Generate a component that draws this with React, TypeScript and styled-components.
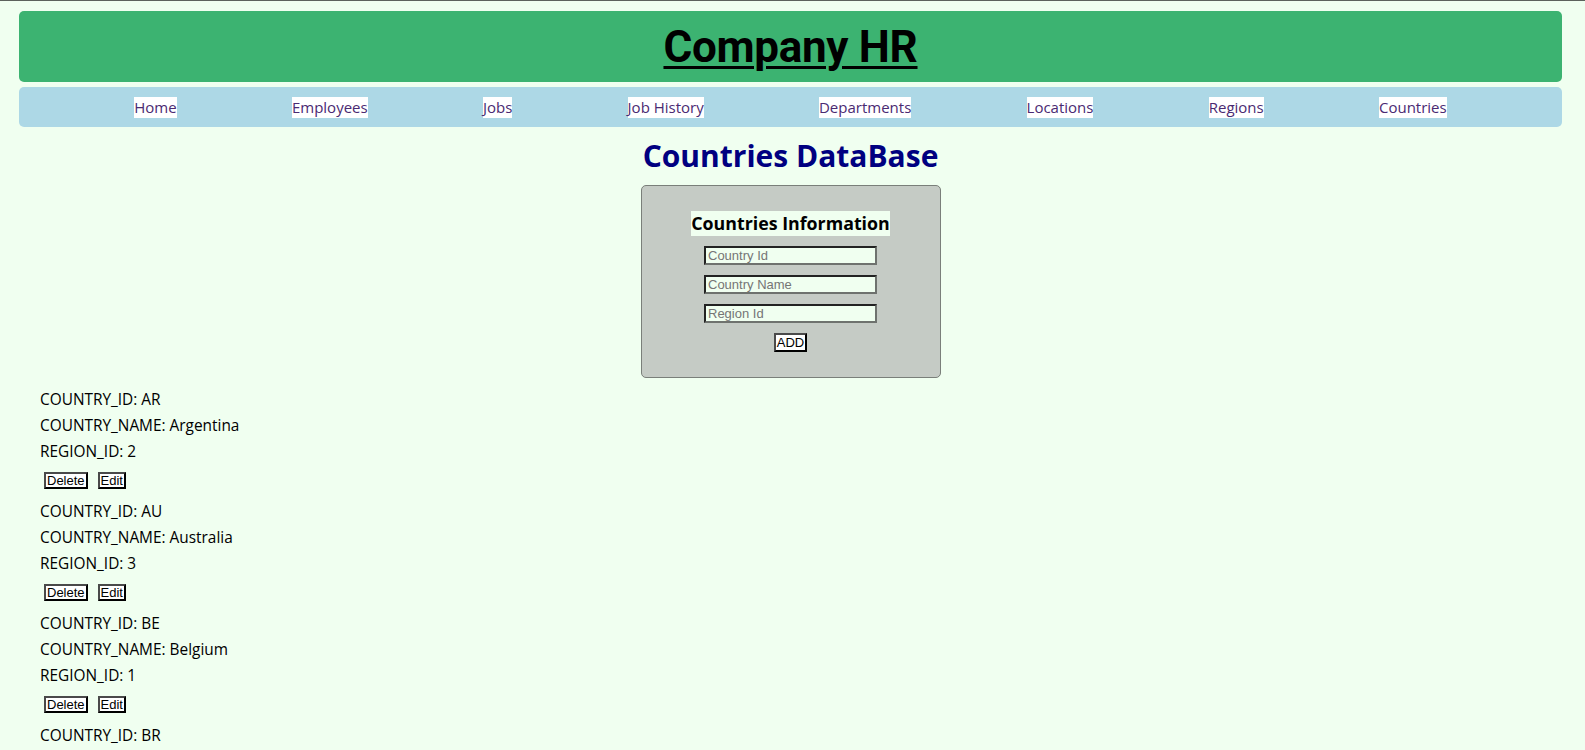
import React from "react";
import styled, { createGlobalStyle } from "styled-components";

const GlobalStyle = createGlobalStyle`
  html, body {
    margin: 0;
    padding: 0;
    background: #f0fff0;
  }
  body {
    font-family: "Open Sans", "Noto Sans", sans-serif;
    border-top: 1px solid #5c625c;
  }
`;

const Page = styled.div`
  padding: 10px 23px 0 19px;
`;

const Header = styled.header`
  height: 71px;
  background: #3cb371;
  border-radius: 5px;
  display: flex;
  align-items: center;
  justify-content: center;
`;

const Title = styled.h1`
  margin: 0;
  font-family: Roboto, "Liberation Sans", sans-serif;
  font-weight: 700;
  font-size: 44px;
  letter-spacing: -0.3px;
  line-height: 1;
  color: #000;
  text-decoration: underline;
  text-decoration-thickness: 3px;
  text-underline-offset: 4px;
`;

const Nav = styled.nav`
  margin-top: 5px;
  height: 40px;
  background: #add8e6;
  border-radius: 5px;
  display: flex;
  align-items: center;
  justify-content: space-evenly;
`;

const NavLink = styled.a`
  background: #ffffff;
  color: #4a2a72;
  font-size: 15px;
  line-height: 21px;
  text-decoration: none;
`;

const PageHeading = styled.h2`
  margin: 7px 0 0;
  text-align: center;
  color: #000080;
  font-size: 30px;
  font-weight: 700;
  line-height: 44px;
`;

const FormBox = styled.form`
  margin: 7px auto 0;
  width: 300px;
  box-sizing: border-box;
  padding: 25px 0;
  background: #c5cbc5;
  border: 1px solid #7a7f7a;
  border-radius: 5px;
  display: flex;
  flex-direction: column;
  align-items: center;
  gap: 10px;
`;

const FormTitle = styled.h3`
  margin: 0;
  background: #f0fff0;
  color: #000;
  font-size: 17.8px;
  font-weight: 700;
  line-height: 25px;
`;

const Field = styled.input`
  width: 173px;
  height: 19px;
  box-sizing: border-box;
  padding: 0 2px;
  background: #f0fff0;
  border-style: solid;
  border-width: 2px;
  border-color: #222 #6e726e #6e726e #222;
  font-family: "Liberation Sans", Arial, sans-serif;
  font-size: 13px;
  outline: none;
  &::placeholder {
    color: #757575;
  }
`;

const Button = styled.button<{ $big?: boolean }>`
  margin: 0;
  padding: 0 1px;
  background: #ffffff;
  color: #000;
  border-style: solid;
  border-width: 2px;
  border-color: #4a4a4a #000 #000 #4a4a4a;
  border-radius: 0;
  font-family: "Liberation Sans", Arial, sans-serif;
  font-size: 13px;
  line-height: ${(p) => (p.$big ? "15px" : "13px")};
  cursor: pointer;
`;

const List = styled.div`
  padding: 9px 0 0 21px;
  display: flex;
  flex-direction: column;
  gap: 10px;
`;

const Record = styled.div`
  display: flex;
  flex-direction: column;
`;

const Line = styled.div`
  color: #000;
  font-size: 15.4px;
  line-height: 26px;
`;

const Actions = styled.div`
  margin-top: 7px;
  padding-left: 4px;
  display: flex;
  gap: 10px;
`;

const navItems = [
  "Home",
  "Employees",
  "Jobs",
  "Job History",
  "Departments",
  "Locations",
  "Regions",
  "Countries",
];

const countries = [
  { id: "AR", name: "Argentina", region: 2 },
  { id: "AU", name: "Australia", region: 3 },
  { id: "BE", name: "Belgium", region: 1 },
  { id: "BR", name: "Brazil", region: 2 },
];

export default function App() {
  return (
    <>
      <GlobalStyle />
      <Page>
        <Header>
          <Title>Company HR</Title>
        </Header>
        <Nav>
          {navItems.map((n) => (
            <NavLink key={n} href="#">
              {n}
            </NavLink>
          ))}
        </Nav>
        <PageHeading>Countries DataBase</PageHeading>
        <FormBox onSubmit={(e) => e.preventDefault()}>
          <FormTitle>Countries Information</FormTitle>
          <Field placeholder="Country Id" />
          <Field placeholder="Country Name" />
          <Field placeholder="Region Id" />
          <Button type="submit" $big>
            ADD
          </Button>
        </FormBox>
        <List>
          {countries.map((c) => (
            <Record key={c.id}>
              <Line>COUNTRY_ID: {c.id}</Line>
              <Line>COUNTRY_NAME: {c.name}</Line>
              <Line>REGION_ID: {c.region}</Line>
              <Actions>
                <Button type="button">Delete</Button>
                <Button type="button">Edit</Button>
              </Actions>
            </Record>
          ))}
        </List>
      </Page>
    </>
  );
}
